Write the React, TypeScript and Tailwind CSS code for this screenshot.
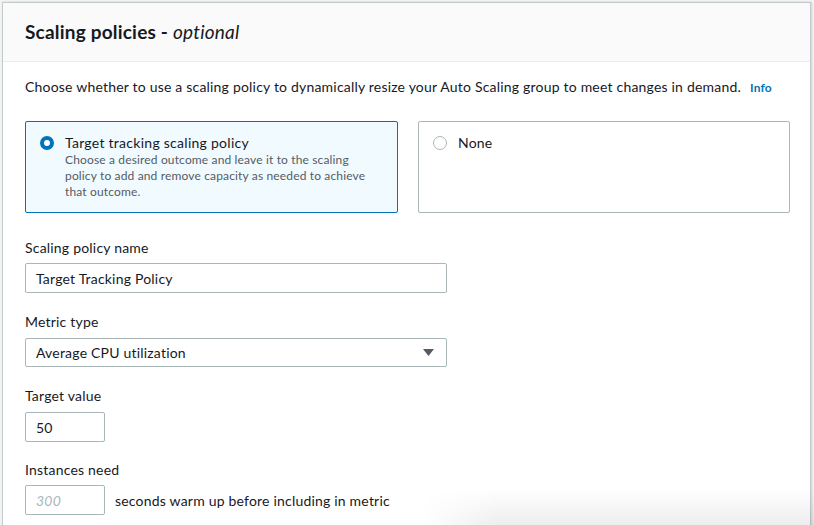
import React from "react";

const font = { fontFamily: 'Lato, "Liberation Sans", sans-serif' };

export default function App() {
  return (
    <div className="relative w-[814px] h-[525px] overflow-hidden bg-[#f2f3f3] text-[#16191f]" style={font}>
      <div className="absolute left-[2px] top-[2px] w-[809px] h-[540px] bg-white border border-[#c4c9cc] shadow-[1px_0_2px_rgba(0,0,0,0.15)]">
        <div className="h-[59px] bg-[#fafafa] border-b border-[#eaeded] flex items-center pl-[22px]">
          <h2 className="text-[19px] font-bold tracking-[0.2px]">
            Scaling policies - <span className="italic font-normal">optional</span>
          </h2>
        </div>
        <div className="pl-[22px] pr-[20px] pt-[15px]">
          <p className="text-[14px] leading-[20px] whitespace-nowrap tracking-[0.2px]">
            Choose whether to use a scaling policy to dynamically resize your Auto Scaling group to meet changes in demand.
            <span className="ml-[9px] text-[12px] font-bold text-[#0073bb]">Info</span>
          </p>
          <div className="mt-[23px] flex gap-[20px]">
            <div className="w-[373px] h-[92px] border border-[#0073bb] bg-[#f1faff] rounded-[2px] pl-[14px] pt-[12px] flex gap-[11px]">
              <div className="mt-[2px] w-[14px] h-[14px] rounded-full border-[4px] border-[#0073bb] bg-white shrink-0" />
              <div>
                <div className="text-[14px] leading-[18px] tracking-[0.27px]">Target tracking scaling policy</div>
                <div className="text-[12px] leading-[16px] text-[#545b64] w-[312px] tracking-[0.15px]">
                  Choose a desired outcome and leave it to the scaling policy to add and remove capacity as needed to achieve that outcome.
                </div>
              </div>
            </div>
            <div className="w-[372px] h-[92px] border border-[#aab7b8] rounded-[2px] pl-[14px] pt-[12px] flex gap-[11px]">
              <div className="mt-[2px] w-[14px] h-[14px] rounded-full border border-[#aab7b8] bg-white shrink-0" />
              <div className="text-[14px] leading-[18px] tracking-[0.2px]">None</div>
            </div>
          </div>

          <div className="tracking-[0.2px]">
            <div className="mt-[26px] text-[14px] leading-[18px]">Scaling policy name</div>
            <div className="mt-[6px] w-[422px] h-[30px] border border-[#aab7b8] rounded-[2px] flex items-center px-[10px] text-[14px]">
              Target Tracking Policy
            </div>

            <div className="mt-[20px] text-[14px] leading-[18px]">Metric type</div>
            <div className="mt-[7px] w-[422px] h-[29px] border border-[#aab7b8] rounded-[2px] flex items-center justify-between pl-[10px] pr-[12px] text-[14px]">
              <span>Average CPU utilization</span>
              <svg width="11" height="9" viewBox="0 0 11 9"><path d="M0 1h11L5.5 8z" fill="#545b64" /></svg>
            </div>

            <div className="mt-[20px] text-[14px] leading-[18px]">Target value</div>
            <div className="mt-[7px] w-[80px] h-[30px] border border-[#aab7b8] rounded-[2px] flex items-center px-[10px] text-[14px]">
              50
            </div>

            <div className="mt-[19px] text-[14px] leading-[18px]">Instances need</div>
            <div className="mt-[6px] flex items-center gap-[10px]">
              <div className="w-[80px] h-[30px] border border-[#aab7b8] rounded-[2px] flex items-center px-[10px] text-[14px] italic text-[#aab7b8]">
                300
              </div>
              <span className="text-[14px]">seconds warm up before including in metric</span>
            </div>
          </div>
        </div>
      </div>
      <div className="absolute left-[420px] right-0 bottom-0 h-[36px] bg-gradient-to-b from-transparent to-[rgba(0,0,0,0.07)] [mask-image:linear-gradient(to_right,transparent,black_80px)] pointer-events-none" />
    </div>
  );
}
